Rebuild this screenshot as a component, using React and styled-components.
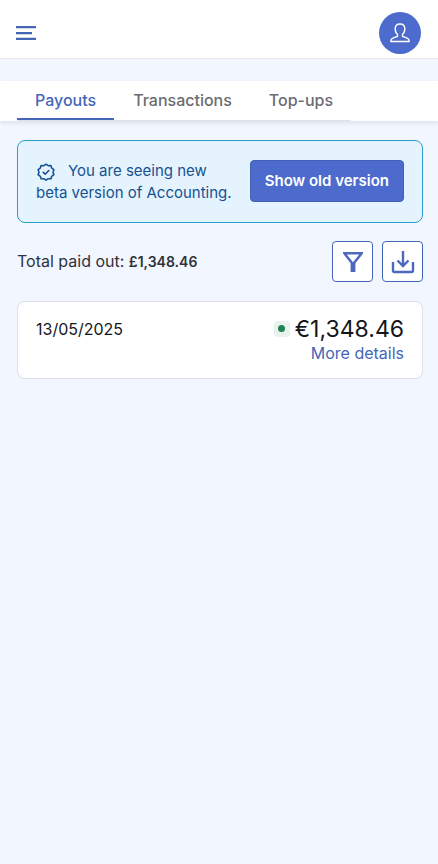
import styled, { createGlobalStyle } from "styled-components";

const payouts = [
  { id: 1, date: "13/05/2025", amount: "€1,348.46" },
];

const tabs = ["Payouts", "Transactions", "Top-ups"];

const MenuIcon = () => (
  <svg width="20" height="14" viewBox="0 0 20 14" fill="currentColor">
    <path d="M0 0h20v2.3H0zM0 5.9h16v2.3H0zM0 11.700h20V14H0z" />
  </svg>
);

const UserIcon = () => (
  <svg width="20" height="20" viewBox="0 0 20 20" fill="none" stroke="currentColor" strokeWidth="1.4" strokeLinejoin="round">
    <path d="M10 1C7 1 5.200 2.900 5.200 5.800C5.200 8.600 6 10.300 7.500 11.400V13.300L2.800 15.100C1.400 15.700 .8 16.500 .8 18.500H19.200C19.200 16.500 18.600 15.700 17.200 15.100L12.500 13.300V11.400C14 10.300 14.800 8.600 14.800 5.800C14.800 2.900 13 1 10 1Z" />
  </svg>
);

const BadgeIcon = () => (
  <svg viewBox="0 0 20 20" fill="none" stroke="currentColor" strokeWidth="1.6" strokeLinejoin="round" strokeLinecap="round">
    <path d="M10 2.2L12.2 3.7L14.9 3.6L15.7 6.1L17.9 7.7L17 10.2L17.9 12.7L15.7 14.3L14.9 16.8L12.2 16.7L10 18.2L7.8 16.7L5.1 16.8L4.3 14.3L2.1 12.7L3 10.2L2.1 7.7L4.3 6.1L5.1 3.6L7.8 3.7Z" />
    <path d="M7.2 10.3L9.2 12.2L12.8 8.5" />
  </svg>
);

const FilterIcon = () => (
  <svg width="20" height="20" viewBox="0 0 20 20" fill="currentColor">
    <path fillRule="evenodd" d="M0 0H20V1.6L12.400 11.200V20H7.600V11.200L0 1.600ZM3.800 2.400L10 10.200L16.200 2.400Z" />
  </svg>
);

const DownloadIcon = () => (
  <svg width="24" height="24" viewBox="0 0 24 24" fill="none" stroke="currentColor" strokeWidth="2.4">
    <path d="M12 1V16M6.5 10.5L12 16L17.5 10.5" />
    <path d="M2 12V20.5Q2 22 3.5 22H20.5Q22 22 22 20.5V12" />
  </svg>
);

const App = () => {
  return (
    <>
      <GlobalStyle />
      <Header>
        <MenuButton aria-label="Menu">
          <MenuIcon />
        </MenuButton>
        <Avatar aria-label="Account">
          <UserIcon />
        </Avatar>
      </Header>
      <TabBar>
        <TabList>
          {tabs.map((tab, i) => (
            <Tab key={tab} $active={i === 0}>
              {tab}
            </Tab>
          ))}
        </TabList>
      </TabBar>
      <Content>
        <Banner>
          <BannerText>
            <BadgeIcon />
            You are seeing new beta version of Accounting.
          </BannerText>
          <PrimaryButton>Show old version</PrimaryButton>
        </Banner>
        <Summary>
          <Total>
            Total paid out: <strong>£1,348.46</strong>
          </Total>
          <Actions>
            <IconButton aria-label="Filter">
              <FilterIcon />
            </IconButton>
            <IconButton aria-label="Download">
              <DownloadIcon />
            </IconButton>
          </Actions>
        </Summary>
        {payouts.map((payout) => (
          <PayoutCard key={payout.id}>
            <PayoutDate>{payout.date}</PayoutDate>
            <PayoutInfo>
              <Amount>
                <Status />
                {payout.amount}
              </Amount>
              <DetailsLink href="#">More details</DetailsLink>
            </PayoutInfo>
          </PayoutCard>
        ))}
      </Content>
    </>
  );
};

export default App;

const GlobalStyle = createGlobalStyle`
  * {
    box-sizing: border-box;
  }

  body {
    margin: 0;
    background: #f2f6fe;
    color: #15161c;
    font-family: Inter, sans-serif;
    font-size: 16px;
    line-height: 22px;
  }

  button {
    font: inherit;
    cursor: pointer;
  }

  svg {
    flex-shrink: 0;
  }
`;

const Header = styled.header`
  display: flex;
  align-items: center;
  justify-content: space-between;
  height: 59px;
  padding: 8px 17px 0 16px;
  background: #fff;
  border-bottom: 1px solid #e4e7ee;
`;

const MenuButton = styled.button`
  display: flex;
  padding: 0;
  border: none;
  background: none;
  color: #4565b5;
`;

const Avatar = styled.button`
  display: flex;
  align-items: center;
  justify-content: center;
  width: 42px;
  height: 42px;
  padding: 0;
  border: none;
  border-radius: 50%;
  background: #4c6bcd;
  color: #fff;
`;

const TabBar = styled.nav`
  margin-top: 22px;
  padding: 0 17px;
  background: #fff;
  box-shadow: 0 2px 4px rgba(30, 40, 70, 0.1);
`;

const TabList = styled.div`
  display: inline-flex;
  gap: 1px;
  vertical-align: top;
  border-bottom: 1px solid #dfe1e6;
`;

const Tab = styled.button`
  height: 39px;
  padding: 0 18px;
  border: none;
  border-bottom: 2px solid ${({ $active }) => ($active ? "#4565b8" : "transparent")};
  background: none;
  color: ${({ $active }) => ($active ? "#4565b8" : "#6b6c72")};
  font-weight: 500;
`;

const Content = styled.main`
  padding: 19px 15px 18px 17px;
`;

const Banner = styled.section`
  display: flex;
  align-items: center;
  justify-content: space-between;
  gap: 14px;
  padding: 19px 18px;
  border: 1px solid #279fc9;
  border-radius: 8px;
  background: #e5f3fe;
`;

const BannerText = styled.p`
  margin: 0;
  color: #165291;
  font-size: 15px;
  line-height: 21px;

  svg {
    width: 20px;
    height: 20px;
    margin-right: 12px;
    vertical-align: middle;
  }
`;

const PrimaryButton = styled.button`
  flex-shrink: 0;
  height: 42px;
  padding: 0 14px;
  border: 1px solid #4160b8;
  border-radius: 4px;
  background: #4c6bcd;
  color: #fff;
  font-size: 15px;
  font-weight: 600;
`;

const Summary = styled.div`
  display: flex;
  align-items: center;
  justify-content: space-between;
  min-height: 42px;
  margin: 18px 0;
`;

const Total = styled.div`
  color: #2f323c;

  strong {
    font-size: 14px;
    font-weight: 600;
  }
`;

const Actions = styled.div`
  display: flex;
  gap: 9px;
`;

const IconButton = styled.button`
  display: flex;
  align-items: center;
  justify-content: center;
  width: 41px;
  height: 41px;
  padding: 0;
  border: 1px solid #4565b8;
  border-radius: 4px;
  background: #fff;
  color: #4c69bd;
`;

const PayoutCard = styled.article`
  display: flex;
  justify-content: space-between;
  padding: 14px 18px;
  border: 1px solid #dcdfe8;
  border-radius: 8px;
  background: #fff;
`;

const PayoutDate = styled.div`
  line-height: 26px;
`;

const PayoutInfo = styled.div`
  display: flex;
  flex-direction: column;
  align-items: flex-end;
`;

const Amount = styled.div`
  display: flex;
  align-items: center;
  gap: 5px;
  font-size: 23px;
  line-height: 26px;
`;

const Status = styled.span`
  display: flex;
  align-items: center;
  justify-content: center;
  width: 16px;
  height: 16px;
  border-radius: 4px;
  background: #e8f3ee;

  &::before {
    content: "";
    width: 7px;
    height: 7px;
    border-radius: 50%;
    background: #1f8354;
  }
`;

const DetailsLink = styled.a`
  color: #4565b8;
  text-decoration: none;
`;
